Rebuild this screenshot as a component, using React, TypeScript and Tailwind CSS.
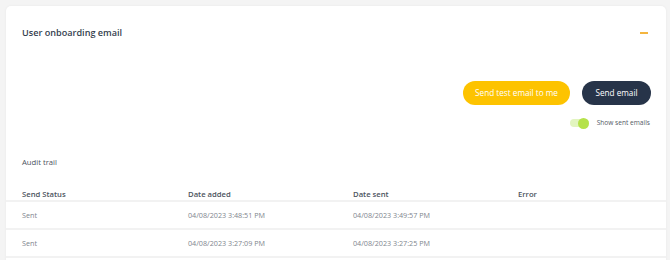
import React from "react";

const rows = [
  { status: "Sent", added: "04/08/2023 3:48:51 PM", sent: "04/08/2023 3:49:57 PM", error: "" },
  { status: "Sent", added: "04/08/2023 3:27:09 PM", sent: "04/08/2023 3:27:25 PM", error: "" },
];

export default function App() {
  return (
    <div className="w-[670px] h-[260px] overflow-hidden bg-[#f4f4f4] pt-[6px] pl-[6px] pr-[4px]" style={{ fontFamily: '"Open Sans", sans-serif' }}>
      <div className="bg-white rounded-t-[5px] shadow-[0_0_3px_rgba(0,0,0,0.05)] h-[300px]">
        <div className="flex items-center justify-between pl-[16px] pr-[18px] pt-[2px] h-[52px]">
          <div className="text-[9.1px] font-semibold text-[#35414f] leading-none">User onboarding email</div>
          <div className="w-[8px] h-[1.5px] bg-[#f4b53f]" />
        </div>
        <div className="flex justify-end gap-[12px] pr-[15px] mt-[23px]">
          <button className="h-[24px] w-[107px] rounded-full bg-[#fdc300] text-white text-[8.2px] leading-none">Send test email to me</button>
          <button className="h-[24px] w-[69px] rounded-full bg-[#273449] text-white text-[8.2px] leading-none">Send email</button>
        </div>
        <div className="flex justify-end items-center gap-[8px] pr-[16px] mt-[12px] h-[12px]">
          <div className="relative w-[19px] h-[8px] rounded-full bg-[#e2f5bf]">
            <div className="absolute right-0 top-[-1.5px] w-[11px] h-[11px] rounded-full bg-[#b5e24a]" />
          </div>
          <span className="text-[6.6px] text-[#525a66] leading-none">Show sent emails</span>
        </div>
        <div className="pl-[16px] mt-[28px] h-[12px] flex items-center text-[7.7px] text-[#4d545e] leading-none">Audit trail</div>
        <div className="mt-[17px]">
          <div className="grid grid-cols-[166px_165px_165px_1fr] pl-[16px] h-[14px] items-end pb-[1px] text-[7.7px] font-semibold text-[#4d545e] leading-none">
            <div>Send Status</div>
            <div>Date added</div>
            <div>Date sent</div>
            <div>Error</div>
          </div>
          {rows.map((r, i) => (
            <div key={i} className="grid grid-cols-[166px_165px_165px_1fr] pl-[16px] pt-[2px] h-[28px] items-center text-[7.2px] text-[#80868e] border-t-2 border-[#f2f2f2] leading-none">
              <div>{r.status}</div>
              <div>{r.added}</div>
              <div>{r.sent}</div>
              <div>{r.error}</div>
            </div>
          ))}
          <div className="border-t-2 border-[#f2f2f2]" />
        </div>
      </div>
    </div>
  );
}
